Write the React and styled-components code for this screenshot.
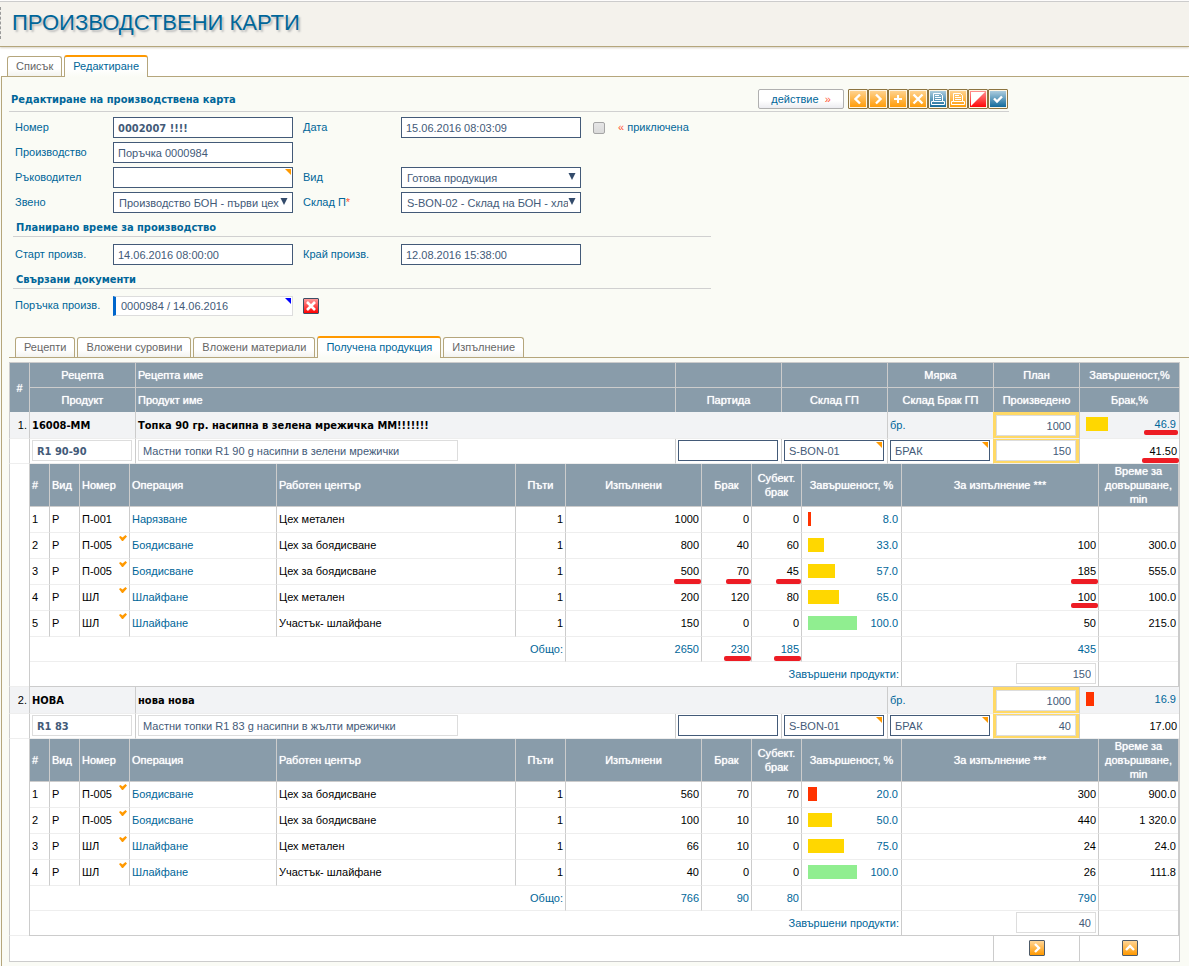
import React from 'react';
import styled, { createGlobalStyle, css } from 'styled-components';

const TEXT_FONT = "'Liberation Sans', Arial, sans-serif";
const BOLD_FONT = "'DejaVu Sans Condensed', 'DejaVu Sans', sans-serif";

const GlobalStyle = createGlobalStyle`
  body {
    margin: 0;
    background: #fafbf5;
  }

  *, *::before, *::after {
    box-sizing: border-box;
  }

  body, input, select, button {
    font-family: ${TEXT_FONT};
    font-size: 11px;
    line-height: 14px;
  }
`;

/* ---------- page frame ---------- */

const Header = styled.header`
  position: relative;
  height: 46px;
  padding: 7px 12px;
  background: #f4f2ec;
  border-top: 1px solid #cccccc;
  border-bottom: 1px solid #b5a67c;
  box-shadow: 0 1px 2px #d8d4c8;
  margin-top: 1px;

  &::before {
    content: '';
    position: absolute;
    left: 0;
    top: 5px;
    height: 32px;
    border-left: 1px dashed #999999;
  }
`;

const Title = styled.h1`
  margin: 0;
  font-family: 'Liberation Sans', Arial, sans-serif;
  font-size: 22px;
  line-height: 28px;
  font-weight: normal;
  color: #006699;
  text-shadow: 2px 2px 2px #bbbbbb;
`;

const TabBar = styled.nav`
  display: flex;
  align-items: flex-end;
  gap: 2px;
  padding-left: ${(p) => p.$indent};
  border-bottom: 1px solid #b5a67c;
`;

const MainTabs = styled(TabBar)`
  height: 30px;
  margin-left: 1px;
`;

const TopArea = styled.div`
  background: #ffffff;
  border-top: 1px solid #ffffff;
  margin-top: -1px;
`;

const Tab = styled.button`
  height: 20px;
  padding: 0 8px 1px;
  border: 1px solid #b5a67c;
  border-bottom: none;
  border-radius: 3px 3px 0 0;
  background: linear-gradient(#ffffff 60%, #f3f3ef);
  color: #666666;
  white-space: nowrap;
  cursor: pointer;

  ${(p) =>
    p.$active &&
    css`
      height: 22px;
      margin-bottom: -1px;
      padding-bottom: 3px;
      border-top: 2px solid #ff9900;
      background: linear-gradient(#ffffff 60%, #fafbf5);
      color: #006699;
    `}
`;

const Panel = styled.main`
  margin-left: 1px;
  padding: 0 0 4px 7px;
  border-left: 1px solid #b5a67c;
`;

/* ---------- form ---------- */

const FormHead = styled.div`
  display: flex;
  align-items: center;
  height: 35px;
  max-width: 1000px;
  padding: 11px 1px 1px 2px;
  border-bottom: 1px solid #d0d0d0;
`;

const FormTitle = styled.h2`
  flex: 1;
  margin: 0;
  padding-top: 2px;
  font-family: ${BOLD_FONT};
  font-size: 11px;
  color: #006699;
`;

const ActionButton = styled.button`
  width: 86px;
  height: 20px;
  margin-right: 4px;
  padding: 0;
  border: 1px solid #b0b0b0;
  border-radius: 2px;
  background: linear-gradient(#ffffff 60%, #ececf0);
  color: #006699;
  cursor: pointer;
`;

const Accent = styled.span`
  color: #ff5533;
`;

const tones = {
  orange: ['#ffd596', '#ff9900'],
  blue: ['#b5d2e2', '#0a6597'],
  red: ['#ff9a9a', '#ff0000'],
};

const IconButton = styled.button`
  display: flex;
  align-items: center;
  justify-content: center;
  width: ${(p) => p.$size || 20}px;
  height: ${(p) => p.$size || 20}px;
  padding: 0;
  border: 1px solid ${(p) => p.$edge || '#8c7440'};
  border-radius: 1px;
  background: linear-gradient(${(p) => tones[p.$tone][0]}, ${(p) => tones[p.$tone][1]});
  box-shadow: ${(p) => (p.$size ? 'none' : 'inset 0 0 0 1px #fff6e4')};
  cursor: pointer;

  svg {
    display: block;
    flex-shrink: 0;
  }
`;

const FormGrid = styled.div`
  display: grid;
  grid-template-columns: 98px 180px 108px 180px auto;
  justify-content: start;
  align-items: center;
  row-gap: 4px;
  padding: ${(p) => p.$top} 0 0 6px;
`;

const Label = styled.label`
  grid-column: ${(p) => (p.$second ? 3 : 1)};
  padding-left: ${(p) => (p.$second ? '10px' : '0')};
  padding-bottom: 2px;
  color: #006699;
  white-space: nowrap;
`;

const fieldLook = css`
  display: block;
  width: 100%;
  height: 21px;
  margin: 0;
  padding: 1px 4px 0;
  border: 1px solid #435a78;
  border-radius: 0;
  background: #ffffff;
  color: #435a78;
`;

const Input = styled.input`
  ${fieldLook}
  font-family: ${(p) => (p.$bold ? BOLD_FONT : TEXT_FONT)};
  font-weight: ${(p) => (p.$bold ? 'bold' : 'normal')};
  border-color: ${(p) => (p.$soft ? '#dddddd' : '#435a78')};
  text-align: ${(p) => (p.$right ? 'right' : 'left')};
  max-width: ${(p) => p.$max || 'none'};
  ${(p) => p.$linked && 'height: 20px; border-color: #dddddd; border-left: 3px solid #0066cc; padding: 0 5px;'}
`;

const FieldBox = styled.div`
  position: relative;
  max-width: ${(p) => p.$max || 'none'};
`;

const Corner = styled.svg`
  position: absolute;
  top: 2px;
  right: 2px;
`;

const Select = styled.select`
  ${fieldLook}
  appearance: none;
  padding: 1px 12px 0 5px;
`;

const Arrow = styled.svg`
  position: absolute;
  top: 6px;
  right: 5px;
  pointer-events: none;
`;

const CheckField = styled.div`
  display: flex;
  align-items: center;
  gap: 13px;
  padding-left: 12px;
  color: #006699;

  label {
    padding-bottom: 2px;
  }
`;

const Checkbox = styled.input`
  appearance: none;
  width: 12px;
  height: 12px;
  margin: 0;
  border: 1px solid #a5a5a5;
  border-radius: 2px;
  background: linear-gradient(#e6e6e6, #dadada);
`;

const SectionTitle = styled.h3`
  height: 24px;
  max-width: 698px;
  margin: 0 0 0 4px;
  padding: 8px 0 0 3px;
  border-bottom: 1px solid #d0d0d0;
  font-family: ${BOLD_FONT};
  font-size: 11px;
  color: #006699;
`;

const RemoveCell = styled.div`
  padding-left: 10px;
`;

const SubTabs = styled(TabBar)`
  height: 42px;
`;

/* ---------- tables ---------- */

const Sheet = styled.div`
  padding: 4px 9px 0 0;
`;

const Table = styled.table`
  width: 100%;
  table-layout: fixed;
  border-collapse: separate;
  border-spacing: 0;
`;

const MainTable = styled(Table)`
  border-top: 1px solid #cccccc;
  border-right: 1px solid #cccccc;
`;

const Th = styled.th`
  height: ${(p) => p.$h}px;
  padding: 0 2px;
  border-left: 1px solid #cccccc;
  border-bottom: ${(p) => (p.$flat ? 'none' : '1px solid #cccccc')};
  background: #899caa;
  color: #ffffff;
  font-weight: normal;
  text-shadow: 0 0 1px #ffffff;
  text-align: ${(p) => (p.$left ? 'left' : 'center')};
`;

const Td = styled.td`
  position: relative;
  height: ${(p) => p.$h}px;
  padding: ${(p) => (p.$bold ? '1px 2px 0' : '0 2px 1px')};
  border-left: 1px solid #cccccc;
  border-bottom: 1px solid ${(p) => (p.$strong ? '#cccccc' : '#eeeeee')};
  background: ${(p) => (p.$shade ? '#f2f3f5' : '#ffffff')};
  color: ${(p) => (p.$blue ? '#006699' : '#000000')};
  font-family: ${(p) => (p.$bold ? BOLD_FONT : TEXT_FONT)};
  font-weight: ${(p) => (p.$bold ? 'bold' : 'normal')};
  text-align: ${(p) => (p.$right ? 'right' : 'left')};
  white-space: nowrap;
`;

const HotTd = styled(Td)`
  padding-top: ${(p) => p.$top || '1px'};
  vertical-align: top;
  background: #ffd966;
  border-left-color: #ffd966;

  ${Input} {
    width: 80px;
  }
`;

const SumTd = styled(Td)`
  color: #006699;
  text-align: right;
`;

const FieldTd = styled(Td)`
  padding-top: 1px;
  vertical-align: top;

  > ${Input} {
    margin-left: ${(p) => (p.$right ? 'auto' : '0')};
  }
`;

const NestTd = styled.td`
  padding: 0;
  border-left: 1px solid #cccccc;
`;

const NestTable = styled(Table)`
  border-right: 1px solid #cccccc;

  th:first-child, td:first-child {
    border-left: none;
  }
`;

const Meter = styled.div`
  display: flex;
  align-items: flex-start;
  justify-content: space-between;
  height: 15px;
  padding: 0 1px 0 4px;
`;

const Bar = styled.span`
  height: 14px;
  background: ${(p) => p.$color};
`;

const Marked = styled.span`
  position: relative;

  &::after {
    content: '';
    position: absolute;
    left: ${(p) => (p.$wide ? '-11px' : '-7px')};
    right: -2px;
    top: ${(p) => p.$drop || 13}px;
    height: 5px;
    border-radius: 2px;
    background: #ed1c24;
  }
`;

const Tick = styled.svg`
  position: absolute;
  top: 2px;
  right: 2px;
`;

const FootTd = styled(Td)`
  ${IconButton} {
    margin: 0 auto;
  }
`;

/* ---------- icons ---------- */

const Stroke = ({ d, w = 2 }) => (
  <svg width="18" height="18" viewBox="0 0 18 18" fill="none" stroke="#fff" strokeWidth={w}>
    <path d={d} />
  </svg>
);

const PrintIcon = () => (
  <svg width="18" height="18" viewBox="0 0 18 18" fill="none" stroke="#fff">
    <path d="M4.5 11.5V3.5H11.5L13.5 5.5V11.5" />
    <path d="M6 5.5H10M6 7.5H12M6 9.5H12" />
    <path d="M4.5 11.5H2.5V14.5H15.5V11.5H13.5M4.5 11.5H13.5" />
  </svg>
);

const SplitIcon = () => (
  <svg width="18" height="18" viewBox="0 0 18 18">
    <path d="M2 2H16L2 16Z" fill="#fff" />
  </svg>
);

const CornerMark = ({ color = '#ff9900' }) => (
  <Corner width="6" height="6" viewBox="0 0 6 6">
    <path d="M0 0H6V6Z" fill={color} />
  </Corner>
);

const RowTick = () => (
  <Tick width="8" height="6" viewBox="0 0 8 6">
    <path d="M0 2L1.5 1L3.5 2.5L6.5 0L8 1.5L4 6H3Z" fill="#ff9900" />
  </Tick>
);

const toolbar = [
  { name: 'Назад', tone: 'orange', icon: <Stroke d="M11 4.5L6.5 9L11 13.5" w={2.4} /> },
  { name: 'Напред', tone: 'orange', icon: <Stroke d="M7 4.5L11.5 9L7 13.5" w={2.4} /> },
  { name: 'Нов', tone: 'orange', icon: <Stroke d="M9 5V13M5 9H13" w={2} /> },
  { name: 'Изтриване', tone: 'orange', icon: <Stroke d="M4.5 4.5L13.5 13.5M13.5 4.5L4.5 13.5" w={2.4} /> },
  { name: 'Печат', tone: 'blue', icon: <PrintIcon /> },
  { name: 'Печат на карта', tone: 'orange', icon: <PrintIcon /> },
  { name: 'Сторно', tone: 'red', icon: <SplitIcon /> },
  { name: 'Запис', tone: 'blue', icon: <Stroke d="M5 8.5L8 11.5L13 6.5" w={2.4} /> },
];

/* ---------- data ---------- */

const groups = [
  {
    no: '1.',
    code: '16008-ММ',
    name: 'Топка 90 гр. насипна в зелена мрежичка ММ!!!!!!!',
    plan: '1000',
    done: '46.9',
    product: 'R1 90-90',
    productName: 'Мастни топки R1 90 g насипни в зелени мрежички',
    made: '150',
    scrap: '41.50',
    marked: true,
    rows: [
      ['П-001', 'Нарязване', 'Цех метален', '1000', '0', '0', '8.0', '', ''],
      ['П-005', 'Боядисване', 'Цех за боядисване', '800', '40', '60', '33.0', '100', '300.0'],
      ['П-005', 'Боядисване', 'Цех за боядисване', '500', '70', '45', '57.0', '185', '555.0'],
      ['ШЛ', 'Шлайфане', 'Цех метален', '200', '120', '80', '65.0', '100', '100.0'],
      ['ШЛ', 'Шлайфане', 'Участък- шлайфане', '150', '0', '0', '100.0', '50', '215.0'],
    ],
    // cells underlined in red, "row:column" -> distance of the line from the text top
    marks: { '2:3': 14, '2:4': 14, '2:5': 14, '2:7': 14, '3:7': 12 },
    totals: ['2650', '230', '185', '435'],
  },
  {
    no: '2.',
    code: 'НОВА',
    name: 'нова нова',
    plan: '1000',
    done: '16.9',
    product: 'R1 83',
    productName: 'Мастни топки R1 83 g насипни в жълти мрежички',
    made: '40',
    scrap: '17.00',
    marked: false,
    rows: [
      ['П-005', 'Боядисване', 'Цех за боядисване', '560', '70', '70', '20.0', '300', '900.0'],
      ['П-005', 'Боядисване', 'Цех за боядисване', '100', '10', '10', '50.0', '440', '1 320.0'],
      ['ШЛ', 'Шлайфане', 'Цех метален', '66', '10', '0', '75.0', '24', '24.0'],
      ['ШЛ', 'Шлайфане', 'Участък- шлайфане', '40', '0', '0', '100.0', '26', '111.8'],
    ],
    marks: {},
    totals: ['766', '90', '80', '790'],
  },
];

const barColor = (v) => {
  if (v >= 100) return '#90ee90';
  return v > 30 ? '#ffd700' : '#ff3300';
};

const Progress = ({ value, marked }) => (
  <Meter>
    <Bar $color={barColor(+value)} style={{ width: Math.floor(value * 0.49) || 0 }} />
    {marked ? <Marked $wide>{value}</Marked> : value}
  </Meter>
);

const SelectField = ({ id, value }) => (
  <FieldBox>
    <Select id={id}>
      <option>{value}</option>
    </Select>
    <Arrow width="8" height="7" viewBox="0 0 8 7">
      <path d="M0.5 0H7.5L4 7Z" fill="#334b6b" />
    </Arrow>
  </FieldBox>
);

const Operations = ({ group }) => {
  const mark = (r, c, text) => {
    const drop = group.marks[`${r}:${c}`];
    return drop ? <Marked $drop={drop} $wide={text.length < 3}>{text}</Marked> : text;
  };

  return (
    <NestTable>
      <colgroup>
        <col width="19" />
        <col width="30" />
        <col width="50" />
        <col width="147" />
        <col />
        <col width="50" />
        <col width="136" />
        <col width="50" />
        <col width="50" />
        <col width="100" />
        <col width="197" />
        <col width="80" />
      </colgroup>
      <thead>
        <tr>
          <Th $h={43} $left>#</Th>
          <Th $left>Вид</Th>
          <Th $left>Номер</Th>
          <Th $left>Операция</Th>
          <Th $left>Работен център</Th>
          <Th>Пъти</Th>
          <Th>Изпълнени</Th>
          <Th>Брак</Th>
          <Th>Субект. брак</Th>
          <Th>Завършеност, %</Th>
          <Th>За изпълнение ***</Th>
          <Th>Време за довършване, min</Th>
        </tr>
      </thead>
      <tbody>
        {group.rows.map((row, r) => (
          <tr key={r}>
            <Td $h={26}>{r + 1}</Td>
            <Td>Р</Td>
            <Td>
              {row[0]}
              {(r > 0 || !group.marked) && <RowTick />}
            </Td>
            <Td $blue>{row[1]}</Td>
            <Td>{row[2]}</Td>
            <Td $right>1</Td>
            <Td $right>{mark(r, 3, row[3])}</Td>
            <Td $right>{mark(r, 4, row[4])}</Td>
            <Td $right>{mark(r, 5, row[5])}</Td>
            <Td $blue>
              <Progress value={row[6]} />
            </Td>
            <Td $right>{mark(r, 7, row[7])}</Td>
            <Td $right>{row[8]}</Td>
          </tr>
        ))}
        <tr>
          <SumTd $h={25} colSpan={6}>Общо:</SumTd>
          <SumTd>{group.totals[0]}</SumTd>
          <SumTd>{group.marked ? <Marked>{group.totals[1]}</Marked> : group.totals[1]}</SumTd>
          <SumTd>{group.marked ? <Marked>{group.totals[2]}</Marked> : group.totals[2]}</SumTd>
          <SumTd />
          <SumTd>{group.totals[3]}</SumTd>
          <SumTd />
        </tr>
        <tr>
          <SumTd $h={25} $strong colSpan={10}>
            <label htmlFor={`ready-${group.no}`}>Завършени продукти:</label>
          </SumTd>
          <FieldTd $strong $right>
            <Input id={`ready-${group.no}`} $soft $right $max="80px" defaultValue={group.made} />
          </FieldTd>
          <Td $strong />
        </tr>
      </tbody>
    </NestTable>
  );
};

const Group = ({ group }) => (
  <tbody>
    <tr>
      <Td $h={27} $shade $right>{group.no}</Td>
      <Td $shade $bold>{group.code}</Td>
      <Td $shade $bold colSpan={3}>{group.name}</Td>
      <Td $shade $blue>бр.</Td>
      <HotTd $top="3px">
        <Input aria-label="План" $soft $right defaultValue={group.plan} />
      </HotTd>
      <Td $shade $blue>
        <Progress value={group.done} marked={group.marked} />
      </Td>
    </tr>
    <tr>
      <Td $h={25} />
      <FieldTd>
        <Input aria-label="Продукт" $soft $bold $max="100px" defaultValue={group.product} />
      </FieldTd>
      <FieldTd>
        <Input aria-label="Продукт име" $soft $max="320px" defaultValue={group.productName} />
      </FieldTd>
      <FieldTd>
        <Input aria-label="Партида" $max="100px" />
      </FieldTd>
      <FieldTd>
        <FieldBox $max="100px">
          <Input aria-label="Склад ГП" defaultValue="S-BON-01" />
          <CornerMark />
        </FieldBox>
      </FieldTd>
      <FieldTd>
        <FieldBox $max="100px">
          <Input aria-label="Склад Брак ГП" defaultValue="БРАК" />
          <CornerMark />
        </FieldBox>
      </FieldTd>
      <HotTd>
        <Input aria-label="Произведено" $soft $right defaultValue={group.made} />
      </HotTd>
      <Td $right>{group.marked ? <Marked>{group.scrap}</Marked> : group.scrap}</Td>
    </tr>
    <tr>
      <Td />
      <NestTd colSpan={7}>
        <Operations group={group} />
      </NestTd>
    </tr>
  </tbody>
);

const App = () => {
  return (
    <>
      <GlobalStyle />
      <TopArea>
        <Header>
          <Title>ПРОИЗВОДСТВЕНИ КАРТИ</Title>
        </Header>
        <MainTabs $indent="6px">
          <Tab>Списък</Tab>
          <Tab $active>Редактиране</Tab>
        </MainTabs>
      </TopArea>
      <Panel>
        <FormHead>
          <FormTitle>Редактиране на производствена карта</FormTitle>
          <ActionButton>
            действие&nbsp; <Accent>»</Accent>
          </ActionButton>
          {toolbar.map((b) => (
            <IconButton key={b.name} aria-label={b.name} $tone={b.tone}>
              {b.icon}
            </IconButton>
          ))}
        </FormHead>

        <FormGrid $top="5px">
          <Label htmlFor="number">Номер</Label>
          <Input id="number" $bold defaultValue="0002007 !!!!" />
          <Label htmlFor="date" $second>Дата</Label>
          <Input id="date" defaultValue="15.06.2016 08:03:09" />
          <CheckField>
            <Checkbox id="closed" type="checkbox" />
            <label htmlFor="closed">
              <Accent>«</Accent> приключена
            </label>
          </CheckField>

          <Label htmlFor="production">Производство</Label>
          <Input id="production" defaultValue="Поръчка 0000984" />

          <Label htmlFor="manager">Ръководител</Label>
          <FieldBox>
            <Input id="manager" />
            <CornerMark />
          </FieldBox>
          <Label htmlFor="kind" $second>Вид</Label>
          <SelectField id="kind" value="Готова продукция" />

          <Label htmlFor="unit">Звено</Label>
          <SelectField id="unit" value="Производство БОН - първи цех" />
          <Label htmlFor="store" $second>
            Склад П<Accent>*</Accent>
          </Label>
          <SelectField id="store" value="S-BON-02 - Склад на БОН - хлад" />
        </FormGrid>

        <SectionTitle>Планирано време за производство</SectionTitle>
        <FormGrid $top="7px">
          <Label htmlFor="start">Старт произв.</Label>
          <Input id="start" defaultValue="14.06.2016 08:00:00" />
          <Label htmlFor="end" $second>Край произв.</Label>
          <Input id="end" defaultValue="12.08.2016 15:38:00" />
        </FormGrid>

        <SectionTitle>Свързани документи</SectionTitle>
        <FormGrid $top="7px">
          <Label htmlFor="order">Поръчка произв.</Label>
          <FieldBox>
            <Input id="order" $linked defaultValue="0000984 / 14.06.2016" />
            <CornerMark color="#0000ff" />
          </FieldBox>
          <RemoveCell>
            <IconButton aria-label="Премахване" $tone="red" $size={16} $edge="#3d4f66">
              <Stroke d="M5 5L13 13M13 5L5 13" w={2.6} />
            </IconButton>
          </RemoveCell>
        </FormGrid>

        <SubTabs $indent="6px">
          <Tab>Рецепти</Tab>
          <Tab>Вложени суровини</Tab>
          <Tab>Вложени материали</Tab>
          <Tab $active>Получена продукция</Tab>
          <Tab>Изпълнение</Tab>
        </SubTabs>

        <Sheet>
          <MainTable>
            <colgroup>
              <col width="20" />
              <col width="106" />
              <col />
              <col width="106" />
              <col width="106" />
              <col width="106" />
              <col width="86" />
              <col width="100" />
            </colgroup>
            <thead>
              <tr>
                <Th $h={49} $flat rowSpan={2}>#</Th>
                <Th $h={25}>Рецепта</Th>
                <Th $left>Рецепта име</Th>
                <Th />
                <Th />
                <Th>Мярка</Th>
                <Th>План</Th>
                <Th>Завършеност,%</Th>
              </tr>
              <tr>
                <Th $h={24} $flat>Продукт</Th>
                <Th $flat $left>Продукт име</Th>
                <Th $flat>Партида</Th>
                <Th $flat>Склад ГП</Th>
                <Th $flat>Склад Брак ГП</Th>
                <Th $flat>Произведено</Th>
                <Th $flat>Брак,%</Th>
              </tr>
            </thead>
            {groups.map((g) => (
              <Group key={g.no} group={g} />
            ))}
            <tfoot>
              <tr>
                <Td $h={26} $strong colSpan={6} />
                <FootTd $strong>
                  <IconButton aria-label="Следваща" $tone="orange" $size={16} $edge="#4d5a68">
                    <Stroke d="M7 5L11 9L7 13" w={2.4} />
                  </IconButton>
                </FootTd>
                <FootTd $strong>
                  <IconButton aria-label="Нагоре" $tone="orange" $size={16} $edge="#4d5a68">
                    <Stroke d="M5 11L9 7L13 11" w={2.4} />
                  </IconButton>
                </FootTd>
              </tr>
            </tfoot>
          </MainTable>
        </Sheet>
      </Panel>
    </>
  );
};

export default App;
